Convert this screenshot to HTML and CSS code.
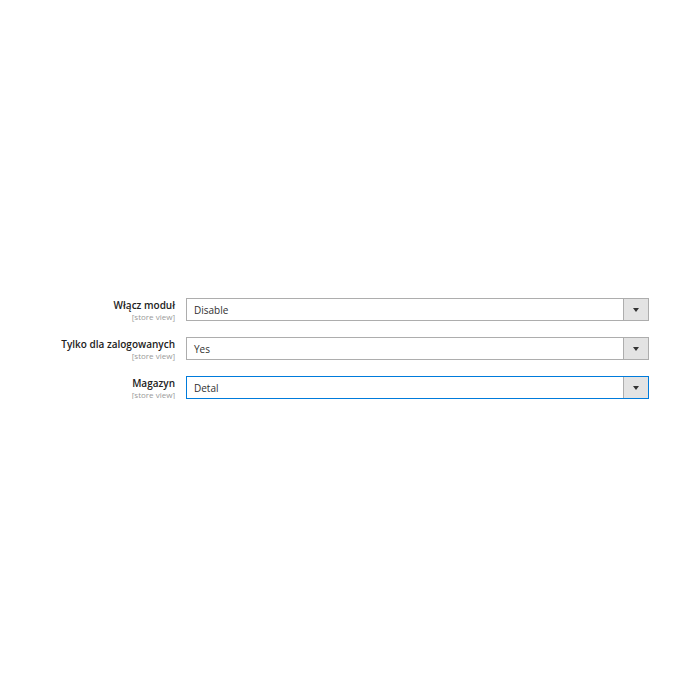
FILE: index.html
```html
<!DOCTYPE html>
<html lang="pl">
<head>
  <meta charset="UTF-8">
  <title>Konfiguracja</title>
  <link rel="stylesheet" href="styles.css">
</head>
<body>

<div class="config">
  <div class="row">
    <div class="label">
      <span class="title">Włącz moduł</span>
      <span class="scope">[store view]</span>
    </div>
    <div class="select">
      <span class="value">Disable</span>
      <span class="btn"><i class="arrow"></i></span>
    </div>
  </div>

  <div class="row">
    <div class="label">
      <span class="title">Tylko dla zalogowanych</span>
      <span class="scope">[store view]</span>
    </div>
    <div class="select">
      <span class="value">Yes</span>
      <span class="btn"><i class="arrow"></i></span>
    </div>
  </div>

  <div class="row">
    <div class="label">
      <span class="title">Magazyn</span>
      <span class="scope">[store view]</span>
    </div>
    <div class="select focus">
      <span class="value">Detal</span>
      <span class="btn"><i class="arrow"></i></span>
    </div>
  </div>
</div>

</body>
</html>
```

FILE: styles.css
```css
body { margin: 0; font-family: "Open Sans", sans-serif; background: #fff; color: #303030; }
.config { padding: 298px 51px 0 0; display: flex; flex-direction: column; gap: 16px; }
.row { display: flex; align-items: flex-start; }
.label {
  width: 175px;
  display: flex;
  flex-direction: column;
  align-items: flex-end;
  padding-top: 1px;
}
.label .title { font-size: 10px; font-weight: 600; line-height: 13px; color: #222; }
.label .scope { font-size: 8px; line-height: 9px; color: #999; }
.select {
  margin-left: 11px;
  flex: 1;
  height: 23px;
  box-sizing: border-box;
  border: 1px solid #adadad;
  display: flex;
  align-items: center;
  background: #fff;
}
.select.focus { border-color: #007bdb; }
.select .value { flex: 1; padding-left: 7px; font-size: 10px; color: #303030; }
.select .btn {
  width: 24px;
  height: 100%;
  border-left: 1px solid #adadad;
  background: #e3e3e3;
  display: flex;
  align-items: center;
  justify-content: center;
}
.arrow {
  width: 0;
  height: 0;
  border-left: 3px solid transparent;
  border-right: 3px solid transparent;
  border-top: 4px solid #333;
}
```
